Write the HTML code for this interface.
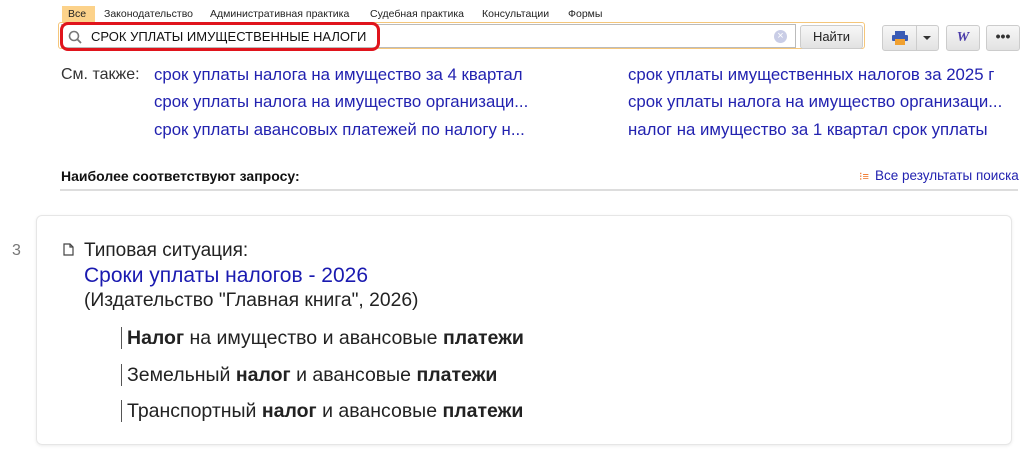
<!DOCTYPE html>
<html><head><meta charset="utf-8"><style>
body{margin:0;width:1024px;height:454px;background:#fff;font-family:"Liberation Sans","Noto Sans CJK SC",sans-serif;position:relative;overflow:hidden;color:#222}
.a{position:absolute;white-space:nowrap}
.tab{font-size:10.5px;top:8px;color:#222}
.lk{color:#2222b0;font-size:16.8px}
.btn{position:absolute;top:25px;height:24px;border:1px solid #ccc;border-radius:3px;background:linear-gradient(#f7f7f7,#e2e2e2)}
.it{position:absolute;left:121px;font-size:19.5px;border-left:1px solid #555;padding-left:5px;height:22px;line-height:22px}
</style></head><body>
<div class="a" style="left:62px;top:6px;width:33px;height:16px;background:#fcd28a"></div>
<div class="a tab" style="left:68px">Все</div>
<div class="a tab" style="left:104px">Законодательство</div>
<div class="a tab" style="left:210px">Административная практика</div>
<div class="a tab" style="left:370px">Судебная практика</div>
<div class="a tab" style="left:482px">Консультации</div>
<div class="a tab" style="left:568px">Формы</div>
<div class="a" style="left:58px;top:22px;width:807px;height:27px;border:1px solid #f5c67a;border-radius:3px;box-sizing:border-box"></div>
<div class="a" style="left:61px;top:24px;width:735px;height:24px;border:1px solid #bbb;background:#fff;box-sizing:border-box"></div>
<div class="a" style="left:60px;top:22px;width:320px;height:29px;border:3px solid #e0141c;border-radius:8px;box-sizing:border-box"></div>
<svg class="a" style="left:68px;top:30px" width="14" height="14"><circle cx="6" cy="6" r="4.5" fill="none" stroke="#777" stroke-width="1.6"/><line x1="9.3" y1="9.3" x2="13" y2="13" stroke="#777" stroke-width="1.8"/></svg>
<div class="a" style="left:91px;top:29px;font-size:13px;color:#111">СРОК УПЛАТЫ ИМУЩЕСТВЕННЫЕ НАЛОГИ</div>
<div class="a" style="left:774px;top:30px;width:13px;height:13px;border-radius:50%;background:#c9cde6;color:#fff;font-size:11px;line-height:13px;text-align:center">×</div>
<div class="btn" style="left:800px;width:61px;top:25px;height:22px;font-size:13px;text-align:center;line-height:22px;color:#222">Найти</div>
<div class="btn" style="left:882px;width:55px"><svg style="position:absolute;left:9px;top:5px" width="16" height="14"><rect x="3" y="0" width="10" height="4" fill="#3a5bb5"/><rect x="0" y="4" width="16" height="6" rx="1" fill="#3a5bb5"/><rect x="3" y="8" width="10" height="6" fill="#f0a030"/></svg><div style="position:absolute;left:33px;top:0;width:1px;height:24px;background:#ccc"></div><div style="position:absolute;left:40px;top:10px;border:4px solid transparent;border-top:4px solid #333"></div></div>
<div class="btn" style="left:946px;width:32px;text-align:center;font:italic bold 14px 'Liberation Serif',serif;line-height:24px;color:#4a3aa8">W</div>
<div class="btn" style="left:986px;width:32px;text-align:center;font-size:14px;line-height:20px;font-weight:bold;color:#333">•••</div>
<div class="a" style="left:61px;top:66px;font-size:16px;color:#333">См. также:</div>
<div class="a lk" style="left:154px;top:65px">срок уплаты налога на имущество за 4 квартал</div>
<div class="a lk" style="left:154px;top:92px">срок уплаты налога на имущество организаци...</div>
<div class="a lk" style="left:154px;top:120px">срок уплаты авансовых платежей по налогу н...</div>
<div class="a lk" style="left:628px;top:65px">срок уплаты имущественных налогов за 2025 г</div>
<div class="a lk" style="left:628px;top:92px">срок уплаты налога на имущество организаци...</div>
<div class="a lk" style="left:628px;top:120px">налог на имущество за 1 квартал срок уплаты</div>
<div class="a" style="left:61px;top:168px;font-size:14px;font-weight:bold;color:#111">Наиболее соответствуют запросу:</div>
<div class="a" style="left:859px;top:170px;font-size:11px;color:#f07020">⁝≡</div>
<div class="a" style="left:875px;top:168px;font-size:13.5px;color:#2222b0">Все результаты поиска</div>
<div class="a" style="left:60px;top:189px;width:958px;height:2px;background:#ddd"></div>
<div class="a" style="left:36px;top:215px;width:976px;height:230px;border:1px solid #e6e6e6;border-radius:6px;box-shadow:0 1px 3px rgba(0,0,0,.08);box-sizing:border-box"></div>
<div class="a" style="left:12px;top:242px;font-size:16px;color:#777">3</div>
<svg class="a" style="left:63px;top:243px" width="11" height="13"><path d="M1 1h6l3 3v8H1z M7 1v3h3" fill="none" stroke="#444" stroke-width="1.2"/></svg>
<div class="a" style="left:84px;top:240px;font-size:19px;color:#222">Типовая ситуация:</div>
<div class="a" style="left:84px;top:264px;font-size:21px;color:#1a1ab0">Сроки уплаты налогов - 2026</div>
<div class="a" style="left:84px;top:290px;font-size:19.3px;color:#222">(Издательство "Главная книга", 2026)</div>
<div class="it" style="top:327px"><b>Налог</b> на имущество и авансовые <b>платежи</b></div>
<div class="it" style="top:364px">Земельный <b>налог</b> и авансовые <b>платежи</b></div>
<div class="it" style="top:400px">Транспортный <b>налог</b> и авансовые <b>платежи</b></div>
</body></html>
